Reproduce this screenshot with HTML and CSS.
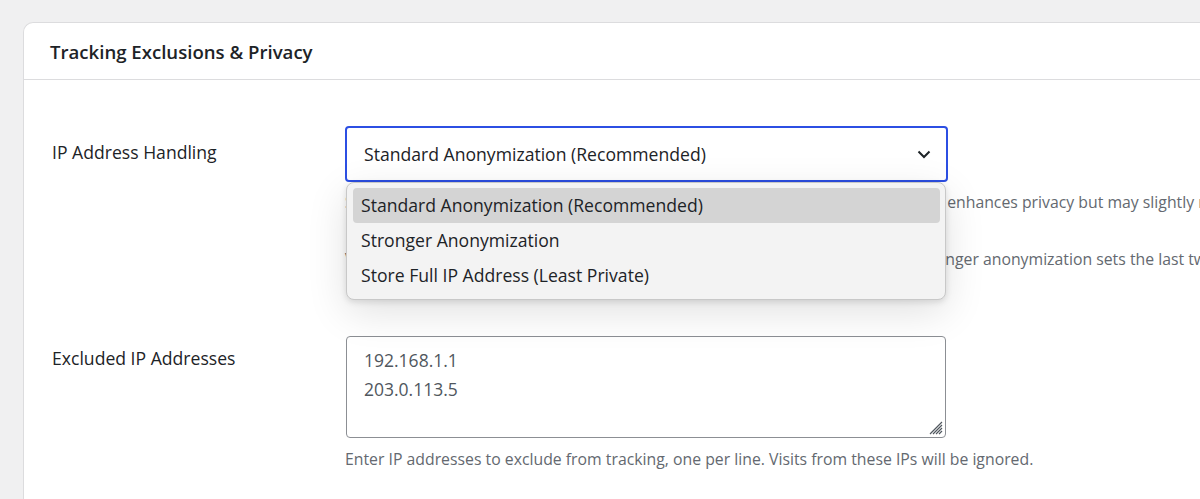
FILE: index.html
```html
<!DOCTYPE html>
<html lang="en">
<head>
  <meta charset="UTF-8" />
  <meta name="viewport" content="width=device-width, initial-scale=1.0"/>
  <title>Tracking Exclusions &amp; Privacy</title>
  <link rel="stylesheet" href="styles.css">
</head>
<body>

<div class="card">
  <div class="card-header">
    <h2>Tracking Exclusions &amp; Privacy</h2>
  </div>
  <div class="card-body">

    <div class="row">
      <label class="label">IP Address Handling</label>
      <div class="field">
        <div class="select-wrap">
          <div class="select">
            <span>Standard Anonymization (Recommended)</span>
            <svg class="chevron" width="14" height="9" viewBox="0 0 14 9"><path d="M1.5 1.5l5.5 5.5 5.5-5.5" fill="none" stroke="#1d2327" stroke-width="2"/></svg>
          </div>
          <ul class="menu">
            <li class="active">Standard Anonymization (Recommended)</li>
            <li>Stronger Anonymization</li>
            <li>Store Full IP Address (Least Private)</li>
          </ul>
        </div>
        <p class="desc">Standard anonymization removes the last octet of each visitor's IP address, which enhances privacy but may slightly reduce location accuracy.</p>
        <p class="desc">Visitor locations are still resolved at city level, for all reports and maps charts. Stronger anonymization sets the last two octets to zero.</p>
      </div>
    </div>

    <div class="row">
      <label class="label label-area">Excluded IP Addresses</label>
      <div class="field">
        <div class="textarea-wrap">
          <textarea class="textarea" rows="3">192.168.1.1
203.0.113.5</textarea>
          <svg class="grip" width="14" height="14" viewBox="0 0 14 14"><path d="M13 4L4 13M13 7L7 13M13 10L10 13M13 1L1 13" stroke="#50575e" stroke-width="1.2"/></svg>
        </div>
        <p class="desc help">Enter IP addresses to exclude from tracking, one per line. Visits from these IPs will be ignored.</p>
      </div>
    </div>

  </div>
</div>

</body>
</html>
```

FILE: styles.css
```css
html, body {
  height: 100%;
}

body {
  margin: 0;
  padding: 22px 0 0 23px;
  font-family: "Open Sans", "Noto Sans", sans-serif;
  background: #f0f0f1;
  color: #1d2327;
  overflow: hidden;
  box-sizing: border-box;
}

.card {
  height: 100%;
  box-sizing: border-box;
  background: #fff;
  border: 1px solid #dcdcde;
  border-right: none;
  border-bottom: none;
  border-radius: 10px 0 0 0;
  overflow: hidden;
}

.card-header {
  height: 56px;
  border-bottom: 1px solid #dcdcde;
  padding: 0 26px;
  display: flex;
  align-items: center;
}

.card-header h2 {
  margin: 0;
  font-size: 18.6px;
  font-weight: 600;
}

.card-body {
  padding: 46px 28px 0;
}

.row {
  display: flex;
  margin-bottom: 66px;
}

.label {
  width: 293px;
  flex-shrink: 0;
  font-size: 17.6px;
  padding-top: 14px;
}

.label-area {
  padding-top: 10px;
}

.field {
  width: 602px;
}

.select-wrap {
  position: relative;
}

.select {
  height: 56px;
  box-sizing: border-box;
  border: 2px solid #2c4fe3;
  border-radius: 4px;
  padding: 0 15px 0 17px;
  display: flex;
  align-items: center;
  justify-content: space-between;
  font-size: 17.6px;
  width: 603px;
}

.menu {
  position: absolute;
  top: 56px;
  left: 1px;
  width: 600px;
  box-sizing: border-box;
  margin: 0;
  padding: 5px 5px 6px 6px;
  list-style: none;
  background: #f3f3f3;
  border: 1px solid #c8c8c8;
  border-radius: 8px;
  box-shadow: 0 12px 40px rgba(0,0,0,0.12), 0 2px 6px rgba(0,0,0,0.12);
  z-index: 2;
}

.menu li {
  height: 35px;
  line-height: 35px;
  padding-left: 8px;
  font-size: 17.6px;
  border-radius: 4px;
}

.menu li.active {
  background: #d4d4d4;
}

.desc {
  margin: 9px 0 0;
  font-size: 15.8px;
  color: #646970;
  white-space: nowrap;
  line-height: 22px;
}

.desc + .desc {
  margin-top: 35px;
}

.textarea-wrap {
  position: relative;
  width: 600px;
  margin-left: 1px;
}

.textarea {
  display: block;
  width: 600px;
  height: 102px;
  box-sizing: border-box;
  border: 1px solid #8c8f94;
  border-radius: 4px;
  padding: 9px 17px;
  font-family: inherit;
  font-size: 17.5px;
  line-height: 29px;
  color: #50575e;
  resize: none;
}

.grip {
  position: absolute;
  right: 3px;
  bottom: 3px;
}

.help {
  margin-top: 10px;
}
```
